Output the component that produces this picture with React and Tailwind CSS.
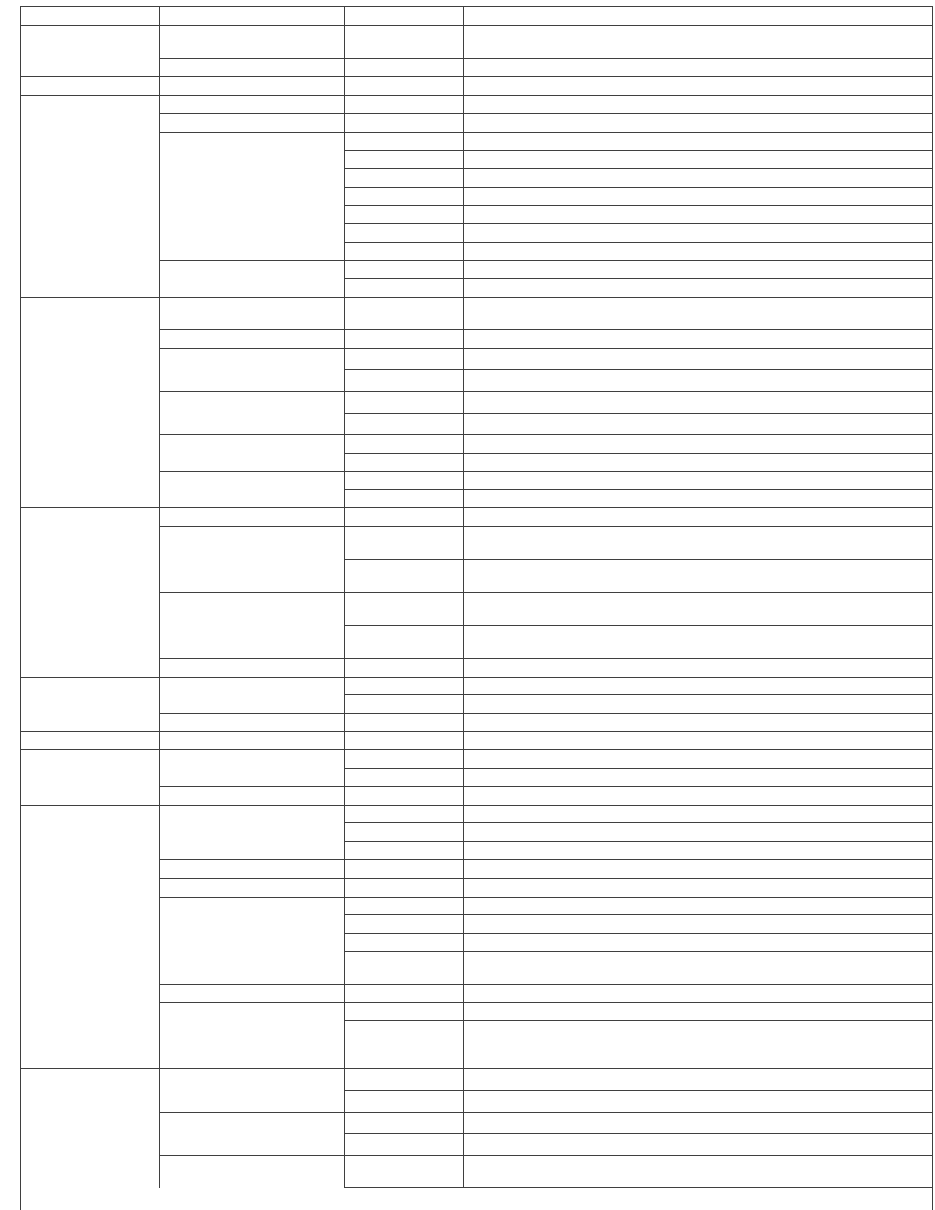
import React from "react";

// each group = one first-column cell; each block = one second-column cell;
// numbers = heights of the third/fourth-column rows (bottom border included)
const groups = [
  [[19]],
  [[33], [18]],
  [[19]],
  [[18], [19], [18, 18, 19, 18, 18, 19, 18], [18, 19]],
  [[32], [19], [21, 22], [22, 21], [19, 18], [18, 18]],
  [[19], [33, 33], [33, 33], [19]],
  [[17, 19], [18]],
  [[18]],
  [[19, 18], [19]],
  [[17, 19, 18], [19], [19], [17, 19, 18, 33], [18], [18, 48]],
  [[22, 22], [21, 22], [32]],
];

function Leaf({ height }) {
  return (
    <div className="flex" style={{ height }}>
      <div className="w-[119px] shrink-0 border-l border-b border-[#3f3f3f]"></div>
      <div className="flex-1 border-l border-b border-[#3f3f3f]"></div>
    </div>
  );
}

function Block({ leaves, open }) {
  return (
    <div className="flex">
      <div
        className={`w-[185px] shrink-0 border-l border-[#3f3f3f] ${
          open ? "" : "border-b"
        }`}
      ></div>
      <div className="flex-1 flex flex-col">
        {leaves.map((h, i) => (
          <Leaf key={i} height={h} />
        ))}
      </div>
    </div>
  );
}

function Group({ blocks, last }) {
  return (
    <div className="flex">
      <div
        className={`w-[138px] shrink-0 border-[#3f3f3f] ${
          last ? "" : "border-b"
        }`}
      ></div>
      <div className="flex-1 flex flex-col">
        {blocks.map((leaves, i) => (
          <Block key={i} leaves={leaves} open={last && i === blocks.length - 1} />
        ))}
        {last && <div className="h-[40px]"></div>}
      </div>
    </div>
  );
}

export default function App() {
  return (
    <div className="min-h-[1210px] bg-white font-['Liberation_Sans',sans-serif]">
      <div className="pt-[6px] pl-[20px]">
        <div className="w-[913px] border-l border-t border-r border-[#3f3f3f] flex flex-col">
          {groups.map((blocks, i) => (
            <Group key={i} blocks={blocks} last={i === groups.length - 1} />
          ))}
        </div>
      </div>
    </div>
  );
}
